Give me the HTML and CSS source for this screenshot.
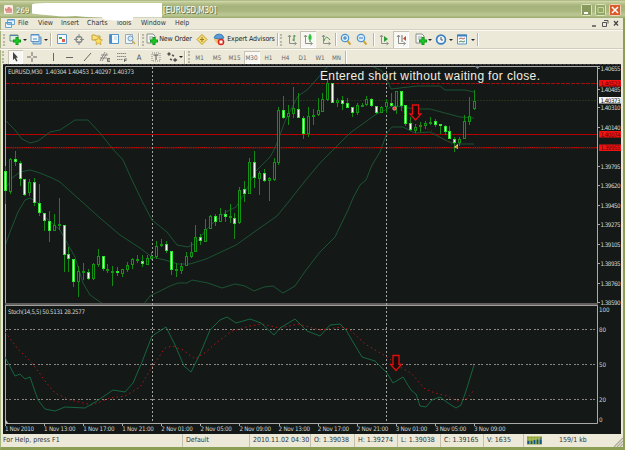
FILE: index.html
```html
<!DOCTYPE html>
<html lang="en">
<head>
<meta charset="utf-8">
<title>EURUSD,M30</title>
<link rel="stylesheet" href="styles.css">
</head>
<body>
<svg width="0" height="0" class="defs">
  <defs>
    <g id="doc"><path d="M1 1h6l2 2v7H1z" fill="#f4f6f2" stroke="#8a9092"/><path d="M3 4h4M3 6h4" stroke="#9aa5aa"/></g>
    <g id="plus"><path d="M8 4v8M4 8h8" stroke="#0b9a14" stroke-width="3"/><path d="M8 5v6M5 8h6" stroke="#20d82c"/></g>
    <g id="axes"><path d="M3.5 2v8.500H10M2 4l1.500-2L5 4M8.500 9l2 1.500L8.500 12" fill="none" stroke="#8b918a"/></g>
  </defs>
</svg>
<div class="window">
  <header class="title">
    <svg class="app" width="10" height="10" viewBox="0 0 10 10"><rect width="9" height="9" rx="1" fill="#f8eee4"/><path d="M1 6V3l2 1 1-2h2l1 2 1-1v3z" fill="#e58a83"/><path d="M2 7h6" stroke="#ba5950"/></svg>
    <span class="account">269</span>
    <svg class="blank" width="133" height="22" viewBox="30 0 133 22"><path d="M32 5Q31 3 46 3H162V17.500H133V20Q120 22 110 20Q103 20 102 17.500Q85 17 76 16Q62 17 52 15.500Q43 15 32 13.500Z" fill="#fff"/></svg>
    <span class="symbol">[EURUSD,M30]</span>
    <div class="controls">
      <svg width="11" height="12"><rect x=".5" y=".5" width="10" height="11" rx="1" fill="#87995c" stroke="#dce4bd"/><path d="M3 9h4" stroke="#fff" stroke-width="2"/></svg>
      <svg width="11" height="12"><rect x=".5" y=".5" width="10" height="11" rx="1" fill="#94a767" stroke="#dce4bd"/><path d="M3 3.500h5.500v5H3z" fill="none" stroke="#c9d5a4"/></svg>
      <svg width="12" height="12"><rect x=".5" y=".5" width="11" height="11" rx="1" fill="#d95a2b" stroke="#f3d2b4"/><path d="M3 3l6 6M9 3L3 9" stroke="#fff" stroke-width="1.500"/></svg>
    </div>
  </header>

  <nav class="menu">
    <svg width="10" height="10" viewBox="0 0 10 10"><path d="M2.500.5h7v5h-7zM.5 3.500h6v5h-6z" fill="#e9f4fc" stroke="#6ca7d2"/><path d="M1 4h6M3 1h6" stroke="#4b91c6"/></svg>
    <span>File</span><span>View</span><span>Insert</span><span>Charts</span><span>Tools</span><span>Window</span><span>Help</span>
    <div class="child-controls">
      <svg width="8" height="9"><path d="M2 7h4" stroke="#555" stroke-width="1.500"/></svg>
      <svg width="8" height="9"><path d="M3 1.500h4v3M1.500 3.500h4v4h-4z" fill="none" stroke="#555"/></svg>
      <svg width="8" height="9"><path d="M2 2l4 4.500M6 2L2 6.500" stroke="#444" stroke-width="1.200"/></svg>
    </div>
  </nav>

  <div class="bar main-bar">
    <i class="grip"></i>
    <svg width="12" height="13" viewBox="0 0 12 13"><path d="M1 2h8v6H1z" fill="#dcefdc" stroke="#6c9275"/><path d="M1 2.500h8" stroke="#4c83b3"/><use href="#plus"/></svg>
    <i class="caret"></i>
    <svg width="12" height="13" viewBox="0 0 12 13"><path d="M3 4h8v7H3z" fill="#a8cdea" stroke="#5f94c0"/><path d="M1 1.500h8v7H1z" fill="#eef6fc" stroke="#5f94c0"/><path d="M1 2h8M3 6h4" stroke="#5391c5"/></svg>
    <i class="caret"></i>
    <i class="sep"></i>
    <svg width="12" height="13" viewBox="0 0 12 13"><path d="M1.500 1.500h9v9h-9z" fill="#f7fbff" stroke="#5b9bd0"/><path d="M3 4h3v2H3z" fill="#36aa45"/><path d="M6 6h3v3H6z" fill="#e1604b"/></svg>
    <svg width="12" height="13" viewBox="0 0 12 13"><circle cx="6" cy="6.500" r="3" fill="none" stroke="#85898a" stroke-width="1.300"/><path d="M6 1v4M6 8v4M1 6.500h4M7 6.500h4" stroke="#85898a"/></svg>
    <svg width="12" height="13" viewBox="0 0 12 13"><path d="M1 2h3l1 1h4v4H1z" fill="#f7df7e" stroke="#c5a13c"/><path d="M7.500 4l1.300 2.500 2.700.4-2 1.900.5 2.700-2.500-1.200L5 11.500l.5-2.700-2-1.900 2.700-.4z" fill="#fbe060" stroke="#c3982c" stroke-width=".7"/></svg>
    <svg width="12" height="13" viewBox="0 0 12 13"><path d="M1.500 1.500h9v9h-9z" fill="#f6fbff" stroke="#5596ce"/><path d="M2 2h2v8H2z" fill="#468dcc"/><path d="M6 4h3M6 6h3" stroke="#b8d0df"/></svg>
    <svg width="12" height="13" viewBox="0 0 12 13"><path d="M1.500 1.500h7v9h-7z" fill="#eef5fb" stroke="#94adbd"/><circle cx="6.500" cy="5.500" r="2.500" fill="#d4eaf8" stroke="#739bbb"/><path d="M8.500 8l2.500 3" stroke="#d3aa48" stroke-width="1.700"/></svg>
    <i class="sep"></i>
    <i class="grip"></i>
    <svg width="12" height="13" viewBox="0 0 12 13"><use href="#doc"/><use href="#plus"/></svg>
    <span>New Order</span>
    <svg width="12" height="13" viewBox="0 0 12 13"><path d="M6 1.500l5 5-5 5-5-5z" fill="#f5dc72" stroke="#c49d2d"/><path d="M6 4v5M4 6.500h4" stroke="#9a7b24"/></svg>
    <svg width="12" height="13" viewBox="0 0 12 13"><path d="M1 6q2 6 8 4l1-5z" fill="#edc46b"/><path d="M1 5q1-4 5-4t5 4q-5 2-10 0" fill="#5a9bd8" stroke="#427fb5"/><circle cx="8" cy="9" r="3.300" fill="#dd2518"/><path d="M6.500 7.500h3v3h-3z" fill="#fff"/></svg>
    <span>Expert Advisors</span>
    <i class="sep"></i>
    <i class="grip"></i>
    <svg width="12" height="13" viewBox="0 0 12 13"><use href="#axes"/><path d="M8 2v6M6.500 7H8M8 3h1.500" stroke="#33863f"/></svg>
    <svg class="pressed" width="16" height="17" viewBox="-2 -2 16 17"><use href="#axes"/><path d="M8 1v8" stroke="#138d20"/><path d="M6.500 2.500h3v4h-3z" fill="#22c534"/></svg>
    <svg width="12" height="13" viewBox="0 0 12 13"><use href="#axes"/><path d="M4 8q2-7 6-1" fill="none" stroke="#4a9b50"/></svg>
    <i class="sep"></i>
    <svg width="12" height="13" viewBox="0 0 12 13"><path d="M7.500 8l3 3.500" stroke="#d0a63a" stroke-width="2"/><circle cx="5" cy="5" r="3.700" fill="#dceffd" stroke="#4b91d0" stroke-width="1.200"/><path d="M3 5h4M5 3v4" stroke="#3479b9"/></svg>
    <svg width="12" height="13" viewBox="0 0 12 13"><path d="M7.500 8l3 3.500" stroke="#d0a63a" stroke-width="2"/><circle cx="5" cy="5" r="3.700" fill="#dceffd" stroke="#4b91d0" stroke-width="1.200"/><path d="M3 5h4" stroke="#3479b9"/></svg>
    <i class="sep"></i>
    <svg width="12" height="13" viewBox="0 0 12 13"><use href="#axes"/><path d="M6 3l4 3-4 3z" fill="#2d9c37"/></svg>
    <svg class="pressed" width="16" height="17" viewBox="-2 -2 16 17"><use href="#axes"/><path d="M7 2v7" stroke="#777"/><path d="M11 3v5L8 5.500z" fill="#c44832"/></svg>
    <i></i>
    <svg width="12" height="13" viewBox="0 0 12 13"><use href="#doc"/><use href="#plus"/></svg>
    <i class="caret"></i>
    <svg width="12" height="13" viewBox="0 0 12 13"><circle cx="6" cy="6.500" r="4.400" fill="#edf5fb" stroke="#3d80c1" stroke-width="1.700"/><path d="M6 4v3h2" fill="none" stroke="#555"/></svg>
    <i class="caret"></i>
    <svg width="12" height="13" viewBox="0 0 12 13"><path d="M1.500 2h9v9h-9z" fill="#f7fbfd" stroke="#6094bb"/><path d="M1 2.500h10" stroke="#3d80c1" stroke-width="2"/><path d="M3 6l2-1 2 1 2-1" fill="none" stroke="#b0604b"/><path d="M3 9l2-1 2 1 2-1" fill="none" stroke="#498e4e"/></svg>
    <i class="caret"></i>
    <i class="sep"></i>
  </div>

  <div class="bar draw-bar">
    <i class="grip"></i>
    <svg class="pressed" width="15" height="14" viewBox="0 0 15 14"><path d="M5 2l5 5.500-2 .3 1.500 3-1.300.7-1.500-3L5 10z" fill="#444"/></svg>
    <svg width="12" height="12"><path d="M6 1v4M6 7v4M1 6h4M7 6h4" stroke="#666"/></svg>
    <i></i>
    <svg width="12" height="12"><path d="M6.500 2v8" stroke="#666"/></svg>
    <svg width="12" height="12"><path d="M2 6.500h7" stroke="#666"/></svg>
    <svg width="12" height="12"><path d="M2 10l7-8" stroke="#666"/></svg>
    <svg width="12" height="12"><path d="M1 10l5-9M3 10l5-8M1 7h7M2 4h7" stroke="#777" stroke-width=".8"/><path d="M11 7.500H8.500v3H11M8.500 9H11" fill="none" stroke="#555" stroke-width=".8"/></svg>
    <svg width="12" height="12"><path d="M1 2.500h9M1 5.500h9M1 8.500h6" stroke="#888" stroke-dasharray="1.500 .5"/><path d="M8.500 11V8H11M8.500 9.500h2" fill="none" stroke="#555" stroke-width=".8"/></svg>
    <span class="label-tool">A</span>
    <svg width="12" height="12"><path d="M2 2h8v8H2z" fill="none" stroke="#888" stroke-dasharray="1 1"/><path d="M3.500 4h5M6 4v5" stroke="#555"/></svg>
    <svg width="12" height="12"><path d="M3 1l2 2-2 2-2-2zM9 7l2.500 2L9 11 7 9z" fill="#555"/><path d="M6 4l2 1M4 8l2 1" stroke="#555" stroke-width="1.500"/></svg>
    <i class="caret"></i>
    <i class="sep"></i>
    <i class="grip"></i>
    <span>M1</span><span>M5</span><span>M15</span><span class="pressed">M30</span><span>H1</span><span>H4</span><span>D1</span><span>W1</span><span>MN</span>
    <i class="sep"></i>
  </div>

  <main class="chart">
    <svg id="chart" width="618" height="370" viewBox="3 64 618 370">
      <defs><clipPath id="price"><rect x="6" y="67" width="591" height="236"/></clipPath></defs>
      <rect x="3" y="64" width="618" height="370" fill="#141917"/>
      <path class="edge" d="M3 64.500H621"/>
      <path class="frame" d="M5.500 423V66.500H597.500V423.500H5M596 66.500h4"/>
      <path d="M5 304H598" stroke="#605f5e" stroke-width="2"/>
      <path d="M5 305.500H598" stroke="#a19f9c"/>
      <g fill="none">
        <path d="M6 100.500H597" stroke="#28341a" stroke-dasharray="2 1"/>
        <path d="M6 83.500H597" stroke="#a40d0d" stroke-dasharray="4 1"/>
        <path d="M6 134.500H597" stroke="#b60000"/>
        <path d="M6 147.500H597" stroke="#c00909" stroke-dasharray="1.500 .7"/>
        <path d="M6 148.500H597" stroke="#3a1711"/>
        <path class="grid" d="M152.500 67V423M386.500 67V423"/>
        <path class="level" d="M6 329.500H597M6 364.500H597M6 399.500H597"/>
      </g>
      <g id="bands" clip-path="url(#price)"></g>
      <g id="candles" shape-rendering="crispEdges"></g>
      <g id="stoch"></g>
      <path d="M402 111L411 122 432 131 456 147" fill="none" stroke="#a01010" stroke-width=".8" stroke-dasharray="1 3"/>
      <circle cx="394.500" cy="108.500" r="1.800" fill="#ff3434" stroke="#eee" stroke-width=".5"/>
      <path d="M454 147l4-3v5z" fill="#f1c3a0"/><path d="M456 146h2v2h-2z" fill="#d49a2a"/>
      <path class="arrow" d="M412.500 105h6v9h2.500l-5.500 6-5.500-6h2.500z"/>
      <path class="arrow" d="M393 355.500h6v9h2.500l-5.500 6-5.500-6h2.500z"/>
      <path d="M474.500 66h6l-3 3z" fill="#7e8997"/>
      <path d="M5 419v5h4z" fill="#bbb"/>
      <text class="note" x="320" y="79.500" textLength="220">Entered short without waiting for close.</text>
      <text class="tiny" x="8" y="73.700" textLength="126">EURUSD,M30&#160; 1.40304 1.40453 1.40297 1.40373</text>
      <text class="tiny" x="8" y="313.700" textLength="77">Stoch(14,5,5) 50.5131 28.2577</text>
      <g id="labels"></g>
    </svg>
  </main>

  <footer class="status">
    <span>For Help, press F1</span><span>Default</span><span>2010.11.02 04:30</span><span>O: 1.39038</span><span>H: 1.39274</span><span>L: 1.39038</span><span>C: 1.39165</span><span>V: 1635</span>
    <span class="traffic"><svg width="16" height="9"><path d="M0 .5h15v8H0z" fill="#879c2a"/><path d="M1.500 8V5M4.500 8V5M7.500 8V4M10.500 8V3M13.500 8V2" stroke="#155487" stroke-width="2"/><path d="M0 3h15M3 0v8M6 0v8M9 0v8M12 0v8" stroke="#cbd48b" stroke-width=".6"/></svg>159/1 kb</span>
    <svg class="resize" width="10" height="10"><path d="M1 10l9-9M4 10l6-6M7 10l3-3" stroke="#aaa795" stroke-width="1.200"/></svg>
  </footer>
</div>
<script src="chart.js"></script>
</body>
</html>
```
FILE: styles.css
```css
* { box-sizing: border-box; }
html, body { margin: 0; height: 100%; overflow: hidden; }
body { font: 7px "DejaVu Sans Condensed", "DejaVu Sans", sans-serif; color: #333; background: #a6b37f; }
svg { display: block; flex: none; }
.defs { display: none; }
.window {
  width: 625px; height: 450px; display: flex; flex-direction: column;
  background: #ece9d8; border: solid #a6b37f; border-width: 0 2px 3px 1px;
  border-right-color: #8c9d54; border-bottom-color: #8c9d54;
  white-space: nowrap;
}
.title {
  height: 18px; flex: none; display: flex; align-items: flex-start; padding: 4px 3px 0;
  margin: 0 -2px 0 -1px; padding-left: 4px;
  background: linear-gradient(#8d9b63 0, #d3dcae 1px, #bac58f 3px, #a5b27b 6px, #aab77f 11px, #bdc995 15px, #9aa96d 18px);
  color: #fff; font-weight: bold; text-shadow: 1px 1px 0 #66733f;
}
.app { margin-top: 1px; }
.account { width: 16px; padding-left: 2px; font-size: 7.5px; line-height: 13px; letter-spacing: .2px; font-weight: normal; }
.blank { margin-top: -4px; position: relative; z-index: 1; }
.symbol { font-size: 8px; line-height: 13px; width: 60px; font-weight: normal; }
.controls { margin-left: auto; display: flex; gap: 3px; padding-right: 1px; }
.menu {
  height: 12px; flex: none; display: grid; align-items: center; padding-left: 4px;
  grid-template-columns: 13px 20px 23px 26px 29px 25px 34px 20px 1fr;
  border-bottom: 1px solid #d5d2c3; line-height: 11px;
}
.child-controls { display: flex; justify-content: flex-end; gap: 3px; padding-right: 3px; }
.bar { display: grid; flex: none; align-items: center; justify-items: center; margin-left: -1px; border-top: 1px solid #faf9f2; }
.bar span { line-height: 13px; }
.main-bar {
  height: 19px; border-bottom: 1px solid #d0cdbd;
  grid-template-columns: 8px 14px 5px 17px 4px 6px 16px 18px 17px 17px 16px 2px 6px 12px 35px 18px 15px 50px 3px 5px 15px 18px 17px 4px 15px 18px 5px 16px 18px 4px 14px 4px 17px 4px 18px 4px 5px;
  color: #222;
}
.main-bar span { letter-spacing: -.12px; }
.draw-bar {
  height: 15px; color: #666; font-size: 6.3px;
  grid-template-columns: 7px 16px 18px 4px 16px 18px 17px 17px 17px 18px 16px 15px 4px 4px 4px 17px 18px 17px 17px 17px 17px 17px 18px 15px 4px;
}
.label-tool { font-size: 7.5px; color: #444; }
.grip { width: 3px; height: 12px; border-left: 2px dotted #bab7a5; }
.sep { width: 2px; height: 13px; border-left: 1px solid #b8b5a4; border-right: 1px solid #fff; }
.caret { border: 2px solid transparent; border-top-color: #222; border-bottom: 0; }
.pressed { background: #f8f7f1; box-shadow: inset 1px 1px #c6c3b4, inset -1px -1px #fff; }
span.pressed { width: 16px; text-align: center; }
.chart { height: 370px; padding-left: 2px; flex: none; }
.status {
  flex: 1; display: grid; align-items: stretch; padding-left: 2px; line-height: 13px;
  grid-template-columns: 179px 67px 61px 44px 43px 43px 43px 40px 90px 1fr;
}
.status span + span { border-left: 1px solid #c3c0b0; padding-left: 3px; }
.status .traffic { display: flex; align-items: center; gap: 16px; }
.resize { align-self: end; justify-self: end; }

.edge { stroke: #463f44; stroke-dasharray: 3 1; }
.frame { fill: none; stroke: #aaa; }
.grid { stroke: #a5a9a5; stroke-dasharray: 2 2; }
.level { stroke: #8b8582; stroke-dasharray: 2 1 2 3; }
.band { fill: none; stroke: #1c5937; stroke-width: .9; }
.wick { stroke: #148914; }
.up { fill: #101b12; stroke: #129312; }
.down { fill: #f5fff1; stroke: #2ee62e; }
.main { fill: none; stroke: #187247; stroke-width: .85; }
.signal { fill: none; stroke: #b21515; stroke-dasharray: 1.500 3; }
.arrow { fill: #170b0b; stroke: #e30d0d; stroke-width: 1.300; }
.note { font: 12px "Liberation Sans", sans-serif; fill: #f1efe3; }
.tiny { font: 6.2px "DejaVu Sans Condensed", "DejaVu Sans", sans-serif; fill: #d2d5d1; }
.tick { stroke: #aaa; }
.tag-red { fill: #f11313; }
.tag-white { fill: #f5f5f5; }
.ink { fill: #111; }
.ink-red { fill: #6c0505; }
```
FILE: chart.js
```js
const NS = "http://www.w3.org/2000/svg";
function add(parent, tag, attrs, text) {
  const el = document.createElementNS(NS, tag);
  for (const key in attrs) el.setAttribute(key, attrs[key]);
  if (text) el.textContent = text;
  document.getElementById(parent).appendChild(el);
}

// high, body top, body bottom, low, direction (0 = down, 1 = up)
const candles = [
  [166,171,191,204,0],[158,159,192,194,1],[151,159,162,166,0],[161,163,179,186,0],[179,179,195,196,0],
  [179,182,193,196,1],[178,182,203,206,0],[184,203,213,216,0],[213,213,221,231,0],[211,221,231,242,0],
  [214,225,231,231,1],[198,224,225,230,1],[225,225,255,272,0],[247,254,259,272,0],[259,259,282,287,0],
  [266,271,282,297,1],[263,271,273,280,1],[269,272,279,280,0],[263,264,279,280,1],[249,256,265,267,1],
  [256,256,269,271,0],[264,269,271,273,1],[266,271,272,286,1],[267,271,273,276,0],[269,269,274,277,1],
  [262,265,270,272,1],[258,259,265,269,1],[255,259,260,263,1],[255,261,264,267,0],[255,258,265,265,1],
  [252,256,259,260,1],[241,246,257,259,1],[239,244,246,247,1],[241,244,251,253,0],[251,251,270,275,0],
  [263,269,271,277,1],[263,266,271,274,1],[252,256,266,266,1],[242,252,257,258,1],[225,237,252,252,1],
  [234,237,241,245,0],[219,229,242,242,1],[215,216,229,229,1],[214,216,222,226,0],[208,214,222,222,1],
  [210,214,217,222,0],[204,216,217,223,1],[213,218,224,239,0],[187,190,223,224,1],[181,189,194,202,0],
  [158,162,194,194,1],[151,162,178,188,0],[171,173,179,195,1],[169,173,181,182,0],[177,178,181,201,1],
  [158,162,180,181,1],[107,110,163,165,1],[96,110,118,119,0],[105,113,117,125,1],[87,108,114,118,1],
  [93,109,118,118,0],[116,118,134,139,0],[107,116,134,137,1],[109,115,116,125,1],[98,110,115,116,1],
  [93,99,112,112,1],[78,83,100,101,1],[83,83,103,103,0],[98,100,103,107,1],[96,100,104,110,0],
  [98,103,108,108,0],[107,107,113,117,0],[103,105,113,115,1],[103,105,106,107,1],[96,99,105,106,1],
  [98,99,106,107,0],[106,106,113,114,0],[106,107,113,113,1],[99,102,107,113,1],[93,103,106,107,0],
  [91,91,107,114,1],[91,91,106,111,0],[105,105,124,126,0],[117,123,130,131,0],[124,127,131,133,1],
  [122,125,127,132,1],[121,123,126,129,1],[117,122,124,125,1],[119,121,125,127,0],[124,124,126,134,0],
  [125,126,132,135,0],[126,131,139,139,0],[137,139,143,152,0],[137,139,143,146,1],[115,121,139,139,1],
  [97,116,122,125,1],[90,101,109,110,1]
];
candles.forEach(([high, top, bottom, low, up], i) => {
  const x = Math.floor(5.4 + i * 4.885);
  add("candles", "path", { class: "wick", d: `M${x + .5} ${high}V${low}` });
  add("candles", "rect", {
    class: up ? "up" : "down", x: x - .5, y: top + .5, width: 2, height: Math.max(1, bottom - top - 1)
  });
});

const bands = [
  "5,120 15,130 22,139 30,143 38,141 50,132 60,130 75,120 88,120 100,133 112,148 123,160 132,180 143,203 152,220 167,232 177,245 188,247 196,243 206,230 212,224 226,212 236,207 245,193 255,172 270,157 275,148 280,135 285,121 298,96 307,90 317,79 328,66 372,66 382,71 387,80 391,89 400,88 417,86 440,86 445,90 465,90 474,92",
  "5,190 12,178 20,172 30,170 40,173 52,178 60,182 70,191 100,218 120,235 140,248 152,257 165,260 178,264 190,264 206,259 236,245 257,230 277,216 290,200 305,181 320,163 335,148 350,133 375,115 387,109 394,105 402,107 415,109 430,109 445,113 460,117 474,118",
  "5,246 10,232 18,212 25,200 30,198 38,203 45,217 60,230 75,257 83,283 90,295 103,304 143,305 150,296 170,286 178,283 187,283 192,280 208,283 222,288 235,284 245,286 254,291 264,287 273,286 283,293 295,286 306,270 320,252 335,237 348,210 353,198 360,185 366,180 372,165 380,152 387,133 392,127 403,127 415,133 430,132 445,140 455,144 474,144"
];
bands.forEach(points => add("bands", "polyline", { class: "band", points }));

add("stoch", "polyline", { class: "signal", points: "5,332 18,349 33,364 45,381 55,393 70,400 92,405 110,398 125,396 140,387 152,367 165,348 172,346 183,350 195,359 206,352 215,344 232,331 250,326 262,324 280,328 298,324 320,330 342,327 350,330 365,344 387,357 400,367 411,373 425,389 435,393 447,396 457,401 467,399 474,390" });
add("stoch", "polyline", { class: "main", points: "5,357 15,376 20,374 25,379 30,377 38,400 45,409 55,411 65,407 85,408 97,401 113,390 125,392 133,383 142,362 152,336 166,327 175,345 184,366 191,372 200,354 210,330 220,320 227,317 236,323 250,319 261,323 274,335 280,328 295,319 307,331 320,336 330,325 340,324 346,330 353,342 362,357 375,361 387,373 393,383 403,377 411,390 416,394 420,406 426,407 432,400 440,397 448,403 456,408 461,405 466,391 474,365" });

const prices = [[68,"1.40655"],[89.5,"1.40485"],[107,"1.40310"],[127,"1.40140"],[166,"1.39795"],[185,"1.39620"],[205,"1.39450"],[224,"1.39275"],[244,"1.39105"],[263,"1.38935"],[283,"1.38760"],[302,"1.38590"]];
prices.forEach(([y, label]) => {
  add("labels", "path", { class: "tick", d: `M598 ${Math.floor(y) + .5}h2` });
  add("labels", "text", { class: "tiny", x: 600.5, y: y + 2.5, textLength: 20 }, label);
});
[[83,"1.40523","red"],[100,"1.40373","white"],[134,"1.40074","red"],[147.5,"1.39955","red"]].forEach(([y, label, color]) => {
  add("labels", "rect", { class: "tag-" + color, x: 599, y: y - 3, width: 22, height: 6.5 });
  add("labels", "text", { class: "tiny " + (color === "red" ? "ink-red" : "ink"), x: 600.5, y: y + 2.5, textLength: 20 }, label);
});
[[309.5,"100"],[329,"80"],[364,"50"],[399,"20"],[419.5,"0"]].forEach(([y, label]) =>
  add("labels", "text", { class: "tiny", x: 599, y: y + 2.5 }, label));
["1 Nov 2010","1 Nov 13:00","1 Nov 17:00","1 Nov 21:00","2 Nov 01:00","2 Nov 05:00","2 Nov 09:00","2 Nov 13:00","2 Nov 17:00","2 Nov 21:00","3 Nov 01:00","3 Nov 05:00","3 Nov 09:00"].forEach((label, i) => {
  const x = 5.5 + i * 39.08;
  add("labels", "path", { class: "tick", d: `M${Math.floor(x) + .5} 423v3` });
  add("labels", "text", { class: "tiny", x: x - .5, y: 431.3, textLength: i ? 31.5 : 29 }, label);
});
```
